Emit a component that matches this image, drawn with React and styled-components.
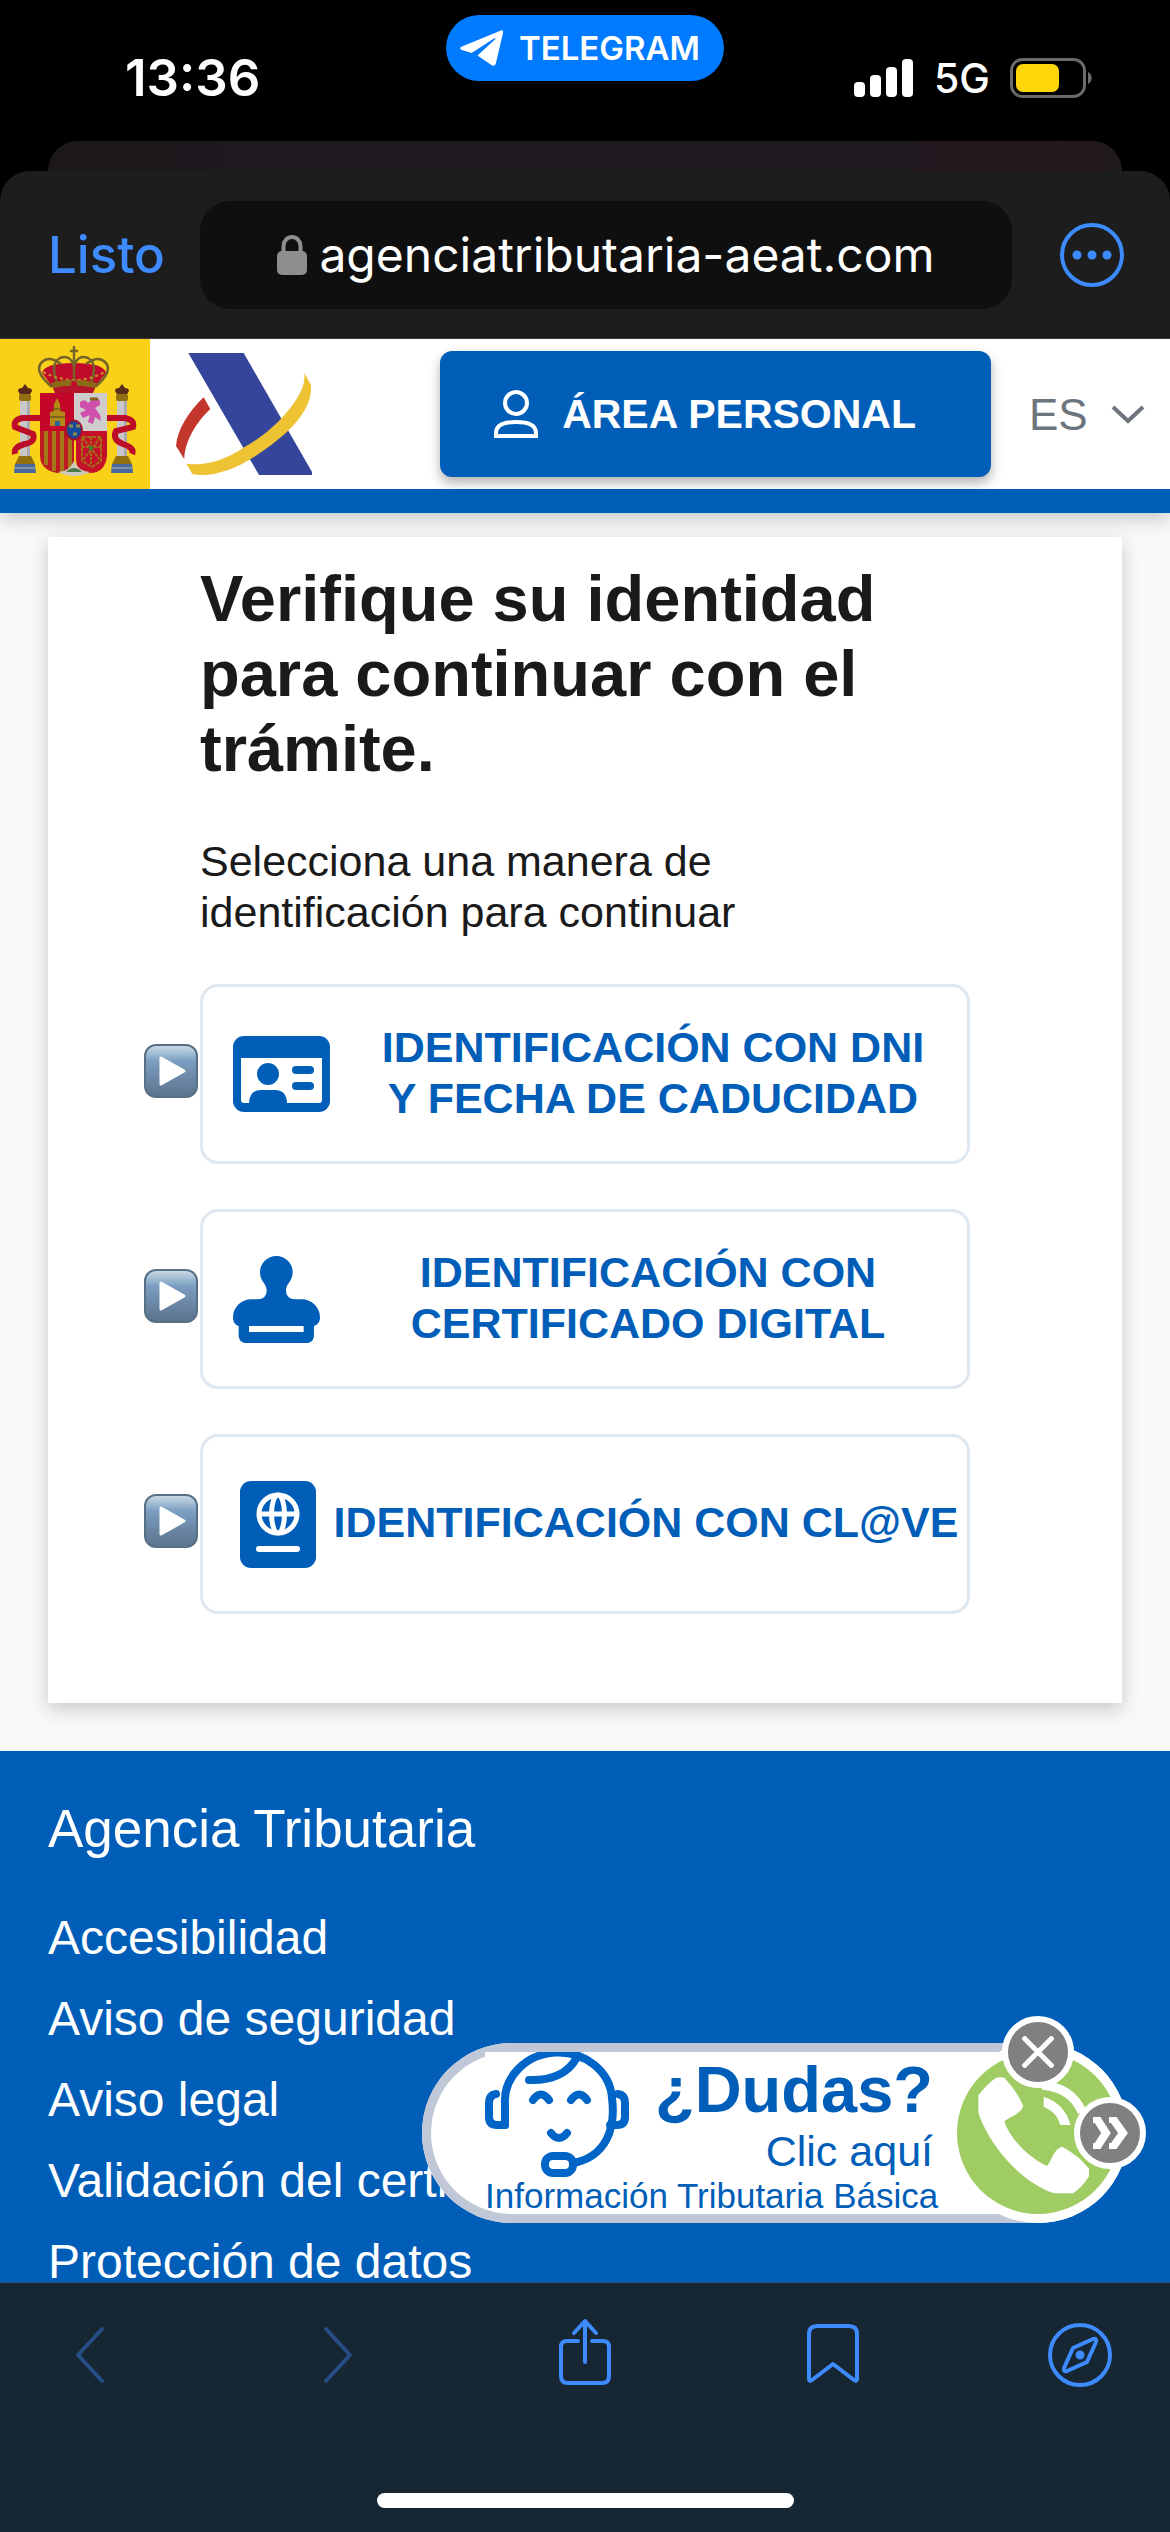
import React from "react";
import styled, { createGlobalStyle } from "styled-components";

const BLUE = "#005eb8";
const TINT = "#3e8bff";

const GlobalStyle = createGlobalStyle`
  * { box-sizing: border-box; }
  body { margin: 0; background: #000; }
  button { border: 0; padding: 0; background: none; font: inherit; color: inherit; cursor: pointer; }
  a { color: inherit; text-decoration: none; }
  svg { display: block; flex: none; }
  h1, h2, p, ul { margin: 0; padding: 0; font-weight: inherit; }
  ul { list-style: none; }
`;

const Screen = styled.div`
  height: 100vh;
  display: flex;
  flex-direction: column;
  overflow: hidden;
  background: #000;
  font-family: "Liberation Sans", Arial, sans-serif;
`;

/* ---------- status bar ---------- */

const StatusBar = styled.header`
  height: 141px;
  flex: none;
  display: grid;
  grid-template-columns: 1fr auto 1fr;
  align-items: start;
  padding: 15px 77px 0;
  color: #fff;
  font-family: Inter, sans-serif;
`;

const Clock = styled.time`
  padding: 33px 0 0 48px;
  font-size: 51px;
  line-height: 60px;
  font-weight: 600;
`;

const AppPill = styled.button`
  display: flex;
  align-items: center;
  gap: 15px;
  height: 66px;
  padding: 0 24px 0 14px;
  border-radius: 33px;
  background: #007aff;
  font-size: 33px;
  font-weight: 600;
`;

const Signals = styled.div`
  display: flex;
  align-items: center;
  justify-content: flex-end;
  gap: 20px;
  padding-top: 33px;
  font-size: 41px;
  line-height: 60px;
  font-weight: 500;
`;

const BackCard = styled.div`
  height: 60px;
  flex: none;
  margin: 0 48px -30px;
  border-radius: 30px 30px 0 0;
  background: linear-gradient(90deg, #1c171b, #20191f 20%, #20191f 80%, #25181b 92%, #201a1d);
`;

/* ---------- browser sheet ---------- */

const Sheet = styled.div`
  flex: 1;
  min-height: 0;
  display: flex;
  flex-direction: column;
  position: relative;
  border-radius: 30px 30px 0 0;
  background: #1d1d1d;
`;

const AddressBar = styled.div`
  height: 168px;
  flex: none;
  display: flex;
  align-items: center;
  justify-content: space-between;
  padding: 0 46px 0 48px;
  border-bottom: 1px solid #3a3a3a;
  color: ${TINT};
  font-family: Inter, sans-serif;
  font-size: 48px;
`;

const DoneButton = styled.button`
  width: 116px;
  text-align: left;
  font-size: 51px;
  font-weight: 500;
`;

const Address = styled.div`
  flex: 1;
  height: 108px;
  margin: 0 48px 0 36px;
  display: flex;
  align-items: center;
  justify-content: center;
  gap: 12px;
  border-radius: 30px;
  background: #0f0f0f;
  color: #fff;
`;

const WebView = styled.div`
  flex: 1;
  min-height: 0;
  overflow: hidden;
  position: relative;
  display: flex;
  flex-direction: column;
  background: #f9f9f9;
`;

const SiteHeader = styled.div`
  flex: none;
  display: flex;
  align-items: center;
  height: 174px;
  border-bottom: 24px solid ${BLUE};
  background: #fff;
  box-shadow: 0 6px 18px rgba(0, 0, 0, 0.2);
`;

const Logos = styled.a`
  display: flex;
  align-items: center;
  gap: 26px;
  margin-right: auto;
`;

const PersonalButton = styled.button`
  display: flex;
  align-items: center;
  gap: 24px;
  height: 126px;
  padding: 0 75px 0 54px;
  border-radius: 12px;
  background: ${BLUE};
  box-shadow: 0 6px 12px rgba(0, 0, 0, 0.3);
  color: #fff;
  font-size: 41px;
  font-weight: 700;
`;

const Language = styled.label`
  display: flex;
  align-items: center;
  gap: 18px;
  padding: 0 25px 0 38px;
  color: #6c757d;
`;

const LanguageSelect = styled.select`
  appearance: none;
  width: 64px;
  padding: 0;
  border: 0;
  background: none;
  color: inherit;
  font: 44px "Liberation Sans", Arial, sans-serif;
`;

const Card = styled.main`
  flex: none;
  margin: 24px 48px 48px;
  padding: 24px 152px 89px;
  background: #fff;
  box-shadow: 0 6px 18px rgba(0, 0, 0, 0.2);
  color: #1a1a1a;
`;

const Title = styled.h1`
  font-size: 65px;
  line-height: 75px;
  font-weight: 700;
`;

const Lead = styled.p`
  max-width: 600px;
  margin-top: 50px;
  font-size: 43px;
  line-height: 51px;
`;

const Options = styled.ul`
  display: flex;
  flex-direction: column;
  gap: 45px;
  margin: 46px 0 0 -56px;
`;

const Option = styled.li`
  display: flex;
  align-items: center;
  gap: 2px;
`;

const Marker = styled.svg`
  margin-bottom: 6px;
`;

const OptionButton = styled.button`
  flex: 1;
  height: 180px;
  display: flex;
  align-items: center;
  gap: 12px;
  padding: 0 3px 0 30px;
  border: 3px solid #dfe8f1;
  border-radius: 18px;
  color: ${BLUE};
  font-size: 43px;
  line-height: 51px;
  font-weight: 700;
`;

const OptionLabel = styled.span`
  flex: 1;
  padding-bottom: 3px;
  text-align: center;
  white-space: pre;
`;

const Footer = styled.footer`
  flex: 1 0 auto;
  padding: 48px;
  background: ${BLUE};
  color: #fff;
`;

const FooterTitle = styled.h2`
  font-size: 53px;
  line-height: 60px;
`;

const FooterLinks = styled.ul`
  margin-top: 38px;
  font-size: 48px;
  line-height: 81px;
`;

/* ---------- help widget ---------- */

const Help = styled.aside`
  position: absolute;
  right: 42px;
  bottom: 59px;
`;

const HelpPill = styled.a`
  display: flex;
  width: 706px;
  height: 180px;
  border-radius: 90px;
  background: #fff;
  color: ${BLUE};
`;

const HelpBody = styled.span`
  flex: 1;
  display: grid;
  grid-template-columns: auto 1fr;
  grid-template-rows: 125px 37px;
  padding-left: 54px;
  margin-right: -90px;
  padding-right: 105px;
  border: 9px solid #c0c7d6;
  border-right: 0;
  border-radius: 90px 0 0 90px;
`;

const HelpText = styled.span`
  display: flex;
  flex-direction: column;
  padding-top: 2px;
  text-align: right;
`;

const HelpTitle = styled.strong`
  font-size: 65px;
  line-height: 72px;
`;

const HelpAction = styled.span`
  font-size: 43px;
  line-height: 51px;
`;

const HelpCaption = styled.span`
  grid-column: 1 / 3;
  font-size: 35px;
  line-height: 37px;
  white-space: nowrap;
`;

const RoundBadge = styled.button`
  position: absolute;
  top: ${(p) => p.$top};
  right: ${(p) => p.$right};
  width: 72px;
  height: 72px;
  display: flex;
  align-items: center;
  justify-content: center;
  border: 6px solid #fff;
  border-radius: 50%;
  background: #808080;
`;

/* ---------- bottom toolbar ---------- */

const BottomBar = styled.nav`
  height: 250px;
  flex: none;
  display: flex;
  flex-direction: column;
  align-items: center;
  justify-content: space-between;
  padding: 31px 0 24px;
  border-top: 1px solid #2c5277;
  background: #172633;
`;

const Tools = styled.div`
  width: 100%;
  display: flex;
  justify-content: space-between;
  padding: 0 50px;
  color: ${TINT};
`;

const Tool = styled.button`
  width: 80px;
  height: 80px;
  display: flex;
  align-items: center;
  justify-content: center;

  &:disabled { color: #264d85; }
`;

const HomeIndicator = styled.div`
  width: 417px;
  height: 15px;
  border-radius: 8px;
  background: #fff;
`;

/* ---------- drawings ---------- */

const Plane = () => (
  <svg width="44" height="36" viewBox="0 0 44 36" fill="#fff">
    <path d="M41 .4 2 16.4c-2.4 1-2.4 2.8 0 3.6l9.6 3L34 8.600c1-.7 2 0 1.200.7L17.500 25.500l14.300 9.700c2 1.100 3.600.5 4.100-1.900L43 3c.5-2.300-.6-3.200-2-2.600z" />
  </svg>
);

const Bars = () => (
  <svg width="60" height="38" viewBox="0 0 60 38" fill="#fff">
    <rect x="0" y="23" width="11" height="15" rx="4" />
    <rect x="16" y="16" width="11" height="22" rx="4" />
    <rect x="32" y="8" width="11" height="30" rx="4" />
    <rect x="48" y="0" width="11" height="38" rx="4" />
  </svg>
);

const Battery = () => (
  <svg width="83" height="40" viewBox="0 0 83 40">
    <rect x="1.500" y="1.500" width="73" height="37" rx="11" fill="none" stroke="#6a6a6a" strokeWidth="3" />
    <rect x="6" y="6" width="43" height="28" rx="7" fill="#ffd60a" />
    <path d="M78 14c5 2 5 10 0 12z" fill="#6a6a6a" />
  </svg>
);

const Lock = () => (
  <svg width="30" height="40" viewBox="0 0 30 40">
    <path d="M6.500 18v-7a8.500 9 0 0 1 17 0v7" fill="none" stroke="#8e8e8e" strokeWidth="4" />
    <rect x="0" y="16" width="30" height="24" rx="5" fill="#8e8e8e" />
  </svg>
);

const More = () => (
  <svg width="64" height="64" viewBox="0 0 64 64" fill="currentColor">
    <circle cx="32" cy="32" r="30" fill="none" stroke="currentColor" strokeWidth="4" />
    <circle cx="17" cy="32" r="4.500" />
    <circle cx="32" cy="32" r="4.500" />
    <circle cx="47" cy="32" r="4.500" />
  </svg>
);

const Pillar = ({ x }) => (
  <g transform={`translate(${x} 0)`}>
    <path d="M-7 52q0-3 4-3l3-4 3 4q4 0 4 3l-3 5h-8z" fill="#5a2a1a" />
    <rect x="-6" y="55" width="12" height="7" rx="2" fill="#927010" />
    <rect x="-5" y="62" width="10" height="56" fill="#c9c8c8" />
    <rect x="2" y="62" width="3" height="56" fill="#aaa9ac" />
    <path d="M-6 117H6l4 8h-20z" fill="#927010" />
    <path d="M-10 125h20l1 9h-22z" fill="#48689f" />
    <path d="M-10 129h20" stroke="#8191a5" strokeWidth="2" />
  </g>
);

const Crest = () => (
  <svg width="150" height="150" viewBox="0 0 150 150" role="img" aria-label="Gobierno de España">
    <path fill="#f8d118" d="M0 0h150v150H0z" />
    <Pillar x={25} />
    <Pillar x={122} />
    <g fill="none" stroke="#bd0c28" strokeWidth="6">
      <path d="M41 79H22q-9 2-7 9l18 7q3 8-8 10-12 3-10 10" />
      <path d="M107 79h18q10 2 8 9l-17 4q-4 9 7 13 12 4 9 10" />
    </g>
    <path d="M54 50 42 34q2-10 32-10t32 10L93 50z" fill="#c00a2b" />
    <g fill="none" stroke="#75642a" strokeWidth="2.500">
      <path d="M52 48Q33 32 42 23q7-7 19 2M95 48q19-16 10-25-7-7-19 2" />
      <path d="M58 46Q49 25 60 19q10-4 14 8 4-12 14-8 11 6 2 27" />
      <path d="M74 7v38M70 12h8" />
    </g>
    <path d="M43 33q31 16 62 0" fill="none" stroke="#c4942b" strokeWidth="2" strokeDasharray="3 3" />
    <path d="M51 44q23-7 46 0l-3 7q-20-5-40 0z" fill="#8c6a17" />
    <path d="M53 49q21-5 42 0l-2 5H55z" fill="#b5122b" />
    <circle cx="74" cy="45" r="3" fill="#c00a2b" />
    <path d="M40 54h34v38H40z" fill="#c5062b" />
    <path d="M74 54h33v38H74z" fill="#cfcccc" />
    <path d="M40 92h34v42H57q-17-3-17-18z" fill="#bd1a22" />
    <path d="M46 92v34M54 92v40M62 92v42M70 92v39" stroke="#a4761a" strokeWidth="4" />
    <path d="M76 92h31v25q-2 17-17 17-14 0-14-15z" fill="#c5102a" />
    <path d="M50 87V73l4-1v-7l3-6 3 6v7l5 1v14z" fill="#b18a16" />
    <path d="M50 78h15M53 70h8" stroke="#7d6516" strokeWidth="2" />
    <path d="M55 82h5v5h-5z" fill="#276195" />
    <path d="M80 63q5-4 8 1l6-5q7-1 6 7l-5 3 5 7 1 6-6-4-2 7-5-2 2-7-7 3-3-5 6-3-6-3z" fill="#cf51ad" />
    <path d="M90 60h8" stroke="#856020" strokeWidth="3" />
    <g fill="none" stroke="#a36b15" strokeWidth="2">
      <path d="M82 98h19v24l-9 6-10-6z" strokeDasharray="4 1" />
      <path d="m83 99 17 22M100 99 83 121M82 108h19M91 98v28" strokeDasharray="3 1" />
    </g>
    <circle cx="91" cy="109" r="2.500" fill="#4a762f" />
    <path d="M58 133q11 0 16-11 5 11 16 11-16 8-32 0z" fill="#cccabc" />
    <path d="M66 133q8-8 16 0z" fill="#487844" />
    <ellipse cx="74" cy="91" rx="8" ry="9.500" fill="#17499b" stroke="#a3112c" strokeWidth="2" />
    <path d="M69 87h4M76 87h4M73 95h4" stroke="#8c8c48" strokeWidth="3" />
  </svg>
);

const AgencyLogo = () => (
  <svg width="136" height="124" viewBox="528 66 408 372" role="img" aria-label="Agencia Tributaria">
    <path fill="#c2362b" d="M611 202 631 237C590 275 553 335 553 388L528 348C532 300 565 245 611 202Z" />
    <path fill="#35459c" d="M565 69H731L936 426V435H777Z" />
    <path fill="#edc233" d="M913 129 933 165C938 230 885 295 800 355C720 415 640 445 577 432L559 401C610 408 670 395 732 352C800 315 845 267 870 235C905 190 916 160 913 129Z" />
  </svg>
);

const Person = () => (
  <svg width="44" height="48" viewBox="0 0 44 48" fill="none" stroke="#fff" strokeWidth="4">
    <circle cx="22" cy="13" r="11" />
    <path d="M2 46V43C2 35 10 32 22 32s20 3 20 11v3z" />
  </svg>
);

const ChevronDown = () => (
  <svg width="34" height="19" viewBox="0 0 34 19" fill="none" stroke="currentColor" strokeWidth="4">
    <path d="m2 2 15 14L32 2" />
  </svg>
);

const PlayMarker = () => (
  <Marker width="54" height="54" viewBox="0 0 54 54" aria-hidden="true">
    <defs>
      <linearGradient id="glass" x1="0" y1="0" x2="0" y2="1">
        <stop offset="0" stopColor="#cadbe8" />
        <stop offset=".14" stopColor="#a9c2d6" />
        <stop offset=".3" stopColor="#7c9fc2" />
        <stop offset=".65" stopColor="#6b87a5" />
        <stop offset="1" stopColor="#5b748c" />
      </linearGradient>
    </defs>
    <rect x="1" y="1" width="52" height="52" rx="11" fill="url(#glass)" stroke="#587085" strokeWidth="2" />
    <path d="M17 14v26l23-13z" fill="#fff" stroke="#fff" strokeWidth="3" strokeLinejoin="round" />
  </Marker>
);

const IdCard = () => (
  <svg width="97" height="76" viewBox="0 0 97 76" fill={BLUE}>
    <rect width="97" height="76" rx="11" />
    <path fill="#fff" d="M8 22h81v42q0 3-3 3H11q-3 0-3-3z" />
    <circle cx="35" cy="38" r="11" />
    <path d="M16 68q0-14 12-14h14q12 0 12 14z" />
    <rect x="59" y="30" width="22" height="8" rx="4" />
    <rect x="59" y="46" width="22" height="8" rx="4" />
  </svg>
);

const Stamp = () => (
  <svg width="87" height="87" viewBox="339 198 261 261" fill={BLUE}>
    <path d="M469 198a49 49 0 0 1 49 49c0 28-20 34-20 54 0 18 12 27 27 27h20c30 0 55 24 55 55 0 12-8 22-18 25v26c0 16-8 25-24 25H380c-16 0-24-9-24-25v-26c-10-3-17-13-17-25 0-31 25-55 55-55h20c15 0 26-9 26-27 0-20-20-26-20-54a49 49 0 0 1 49-49z" />
    <path d="M387 408h164v18H387z" fill="#fff" />
  </svg>
);

const Passport = () => (
  <svg width="83" height="87" viewBox="0 0 83 87">
    <rect x="7" width="76" height="87" rx="11" fill={BLUE} />
    <g fill="none" stroke="#fff" strokeWidth="5">
      <circle cx="45" cy="33" r="19" />
      <ellipse cx="45" cy="33" rx="6.500" ry="19" />
      <path d="M26 33h38" />
      <path d="M26 68h38" strokeWidth="6" strokeLinecap="round" />
    </g>
  </svg>
);

const Operator = () => (
  <svg width="144" height="125" viewBox="0 0 144 125">
    <path fill="#fff" d="M0 0h144v125H0z" />
    <g fill="none" stroke="#0065c6" strokeWidth="8" strokeLinecap="round" strokeLinejoin="round">
      <path d="M20 73V52a53 48 0 0 1 107-6c4 31-6 58-38 65" />
      <path d="M11 42q-7 1-7 9v14q0 8 8 8h8M133 42q7 1 7 9v14q0 8-8 8h-7" />
      <path d="M44 28q34 1 47-21" />
      <path d="M48 48q8-11 16 0M86 48q8-11 16 0M66 81q8 10 16 0" />
      <rect x="60" y="104" width="28" height="17" rx="8" />
    </g>
  </svg>
);

const Phone = () => (
  <svg width="180" height="180" viewBox="143 128 540 540">
    <circle cx="413" cy="398" r="270" fill="#fff" />
    <circle cx="413" cy="398" r="243" fill="#a0cd63" />
    <path fill="#fff" d="M234 285Q262 248 288 232Q300 229 312 232Q348 268 369 318C358 342 338 346 312 362C325 410 385 472 440 497C455 480 458 448 485 439Q535 465 566 505V528Q545 562 518 579H462C345 540 255 410 234 335Z" />
    <path fill="#fff" d="M430 290C474 302 502 336 510 374H480C472 346 456 330 430 320Z" />
    <path fill="none" stroke="#fff" strokeWidth="27" d="M425 254Q515 262 545 335" />
  </svg>
);

const Cross = () => (
  <svg width="32" height="32" viewBox="0 0 32 32" stroke="#fff" strokeWidth="5">
    <path d="m1 1 30 30M31 1 1 31" />
  </svg>
);

const DoubleChevron = () => (
  <svg width="36" height="32" viewBox="0 0 36 32" fill="none" stroke="#fff" strokeWidth="8">
    <path d="M1 2h4l9 14-9 14H1M17 2h4l10 14-10 14h-4" />
  </svg>
);

const Line = ({ children, w = 80, h = 80 }) => (
  <svg width={w} height={h} viewBox={`0 0 ${w} ${h}`} fill="none" stroke="currentColor" strokeWidth="4" strokeLinecap="round" strokeLinejoin="round">
    {children}
  </svg>
);

/* ---------- data ---------- */

const OPTIONS = [
  { label: "IDENTIFICACIÓN CON DNI\nY FECHA DE CADUCIDAD", Icon: IdCard },
  { label: "IDENTIFICACIÓN CON\nCERTIFICADO DIGITAL", Icon: Stamp },
  { label: "IDENTIFICACIÓN CON CL@VE", Icon: Passport },
];

const LINKS = [
  "Accesibilidad",
  "Aviso de seguridad",
  "Aviso legal",
  "Validación del certificado",
  "Protección de datos",
];

export default function App() {
  return (
    <Screen>
      <GlobalStyle />
      <StatusBar>
        <Clock>13:36</Clock>
        <AppPill><Plane />TELEGRAM</AppPill>
        <Signals><Bars />5G<Battery /></Signals>
      </StatusBar>
      <BackCard />
      <Sheet>
        <AddressBar>
          <DoneButton>Listo</DoneButton>
          <Address><Lock /><span>agenciatributaria-aeat.com</span></Address>
          <button aria-label="Más opciones"><More /></button>
        </AddressBar>

        <WebView>
          <SiteHeader>
            <Logos href="#inicio"><Crest /><AgencyLogo /></Logos>
            <PersonalButton><Person />ÁREA PERSONAL</PersonalButton>
            <Language>
              <LanguageSelect aria-label="Idioma" defaultValue="ES">
                <option>ES</option>
              </LanguageSelect>
              <ChevronDown />
            </Language>
          </SiteHeader>

          <Card>
            <Title>Verifique su identidad para continuar con el trámite.</Title>
            <Lead>Selecciona una manera de identificación para continuar</Lead>
            <Options>
              {OPTIONS.map(({ label, Icon }) => (
                <Option key={label}>
                  <PlayMarker />
                  <OptionButton>
                    <Icon />
                    <OptionLabel>{label}</OptionLabel>
                  </OptionButton>
                </Option>
              ))}
            </Options>
          </Card>

          <Footer>
            <FooterTitle>Agencia Tributaria</FooterTitle>
            <FooterLinks>
              {LINKS.map((text) => (
                <li key={text}><a href="#pie">{text}</a></li>
              ))}
            </FooterLinks>
          </Footer>

          <Help>
            <HelpPill href="#ayuda">
              <HelpBody>
                <Operator />
                <HelpText>
                  <HelpTitle>¿Dudas?</HelpTitle>
                  <HelpAction>Clic aquí</HelpAction>
                </HelpText>
                <HelpCaption>Información Tributaria Básica</HelpCaption>
              </HelpBody>
              <Phone />
            </HelpPill>
            <RoundBadge $top="-27px" $right="54px" aria-label="Cerrar"><Cross /></RoundBadge>
            <RoundBadge $top="54px" $right="-18px" aria-label="Ocultar"><DoubleChevron /></RoundBadge>
          </Help>
        </WebView>

        <BottomBar>
          <Tools>
            <Tool disabled aria-label="Atrás"><Line><path d="M52 15 28 41l24 26" /></Line></Tool>
            <Tool disabled aria-label="Adelante"><Line><path d="m28 15 24 26-24 26" /></Line></Tool>
            <Tool aria-label="Compartir">
              <Line>
                <path d="M33 27h-11q-6 0-6 6v29q0 7 7 7h34q7 0 7-7V33q0-6-6-6H47M40 48V8M29 19 40 7l11 12" />
              </Line>
            </Tool>
            <Tool aria-label="Marcadores">
              <Line><path d="M16 65V20q0-8 8-8h32q8 0 8 8v45q0 3-3 1L40 50 19 66q-3 2-3-1z" /></Line>
            </Tool>
            <Tool aria-label="Abrir en el navegador">
              <Line>
                <circle cx="40" cy="41" r="30" />
                <path d="m33 34 20-9q4-1 3 3l-9 20-20 9q-4 1-3-3z" />
                <circle cx="40" cy="41" r="2.500" fill="currentColor" />
              </Line>
            </Tool>
          </Tools>
          <HomeIndicator />
        </BottomBar>
      </Sheet>
    </Screen>
  );
}
